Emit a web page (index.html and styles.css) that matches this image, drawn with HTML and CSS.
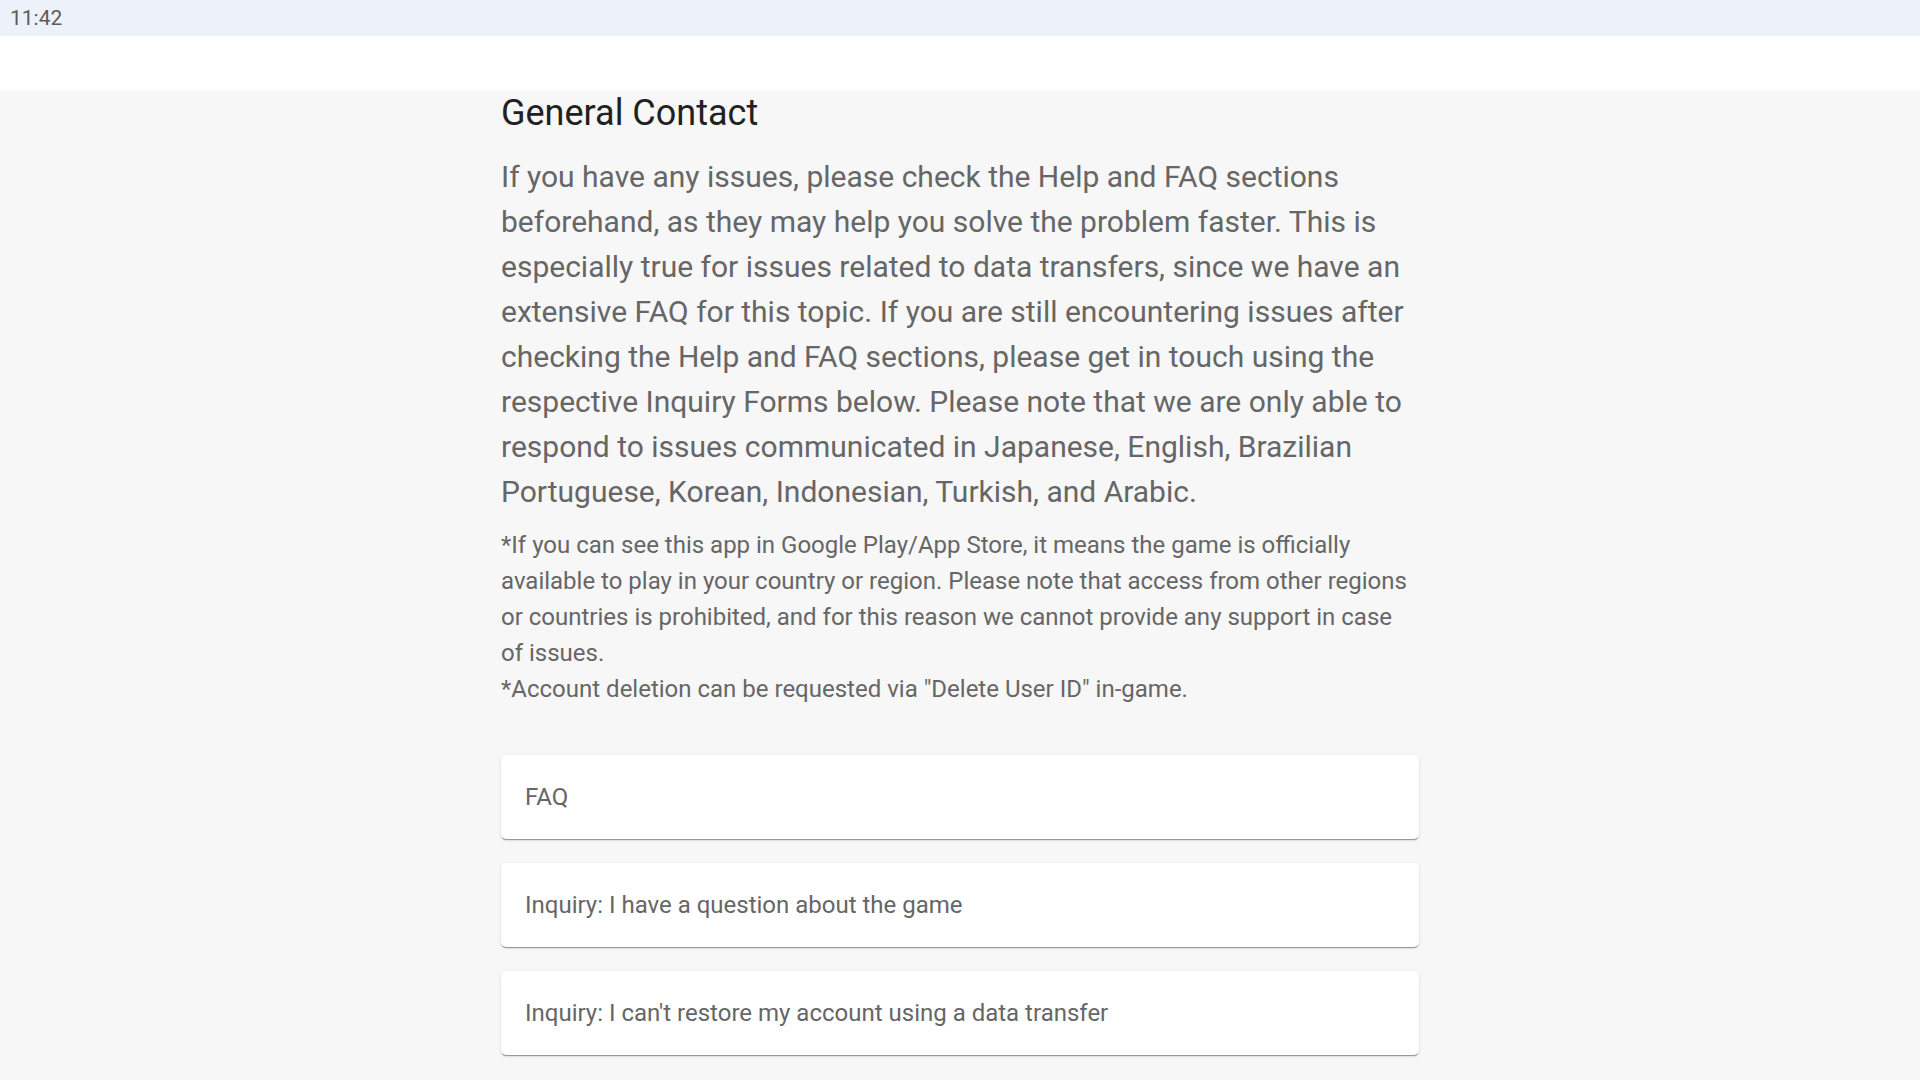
FILE: index.html
```html
<!DOCTYPE html>
<html lang="en">
<head>
<meta charset="utf-8">
<title>General Contact</title>
<link rel="stylesheet" href="styles.css">
</head>
<body>
<div class="statusbar"><span class="time">11:42</span></div>
<div class="appbar"></div>
<main class="page">
  <div class="content">
    <h1 class="title">General Contact</h1>
    <p class="lead">If you have any issues, please check the Help and FAQ sections beforehand, as they may help you solve the problem faster. This is especially true for issues related to data transfers, since we have an extensive FAQ for this topic. If you are still encountering issues after checking the Help and FAQ sections, please get in touch using the respective Inquiry Forms below. Please note that we are only able to respond to issues communicated in Japanese, English, Brazilian Portuguese, Korean, Indonesian, Turkish, and Arabic.</p>
    <p class="note">*If you can see this app in Google Play/App Store, it means the game is officially available to play in your country or region. Please note that access from other regions or countries is prohibited, and for this reason we cannot provide any support in case of issues.<br>*Account deletion can be requested via "Delete User ID" in-game.</p>
    <div class="cards">
      <div class="card">FAQ</div>
      <div class="card">Inquiry: I have a question about the game</div>
      <div class="card">Inquiry: I can't restore my account using a data transfer</div>
    </div>
  </div>
</main>
</body>
</html>
```
FILE: styles.css
```css
html, body {
  margin: 0;
  padding: 0;
}
body {
  background: #f7f7f7;
  font-family: Roboto, "Noto Sans", "Liberation Sans", sans-serif;
  overflow: hidden;
  height: 1080px;
}
.statusbar {
  height: 36px;
  background: #edf2fa;
  display: flex;
  align-items: center;
  padding-left: 10px;
}
.time {
  font-size: 21px;
  color: #5c5c5c;
}
.appbar {
  height: 54px;
  background: #ffffff;
}
.page {
  display: flex;
  justify-content: center;
}
.content {
  width: 918px;
}
.title {
  margin: 0;
  padding-top: 1px;
  font-size: 36px;
  line-height: 44px;
  font-weight: 400;
  color: #212121;
}
.lead {
  margin: 19px 0 0;
  font-size: 30px;
  line-height: 45px;
  color: #666666;
}
.note {
  margin: 13px 0 0;
  font-size: 24px;
  line-height: 36px;
  color: #666666;
}
.cards {
  margin-top: 48px;
  display: flex;
  flex-direction: column;
  gap: 24px;
}
.card {
  height: 84px;
  box-sizing: border-box;
  background: #ffffff;
  border-radius: 5px;
  padding: 0 24px;
  display: flex;
  align-items: center;
  font-size: 24px;
  color: #666666;
  box-shadow: 0 2px 1px -1px rgba(0,0,0,0.25), 0 1px 1px 0 rgba(0,0,0,0.14), 0 1px 3px 0 rgba(0,0,0,0.12);
}
```
